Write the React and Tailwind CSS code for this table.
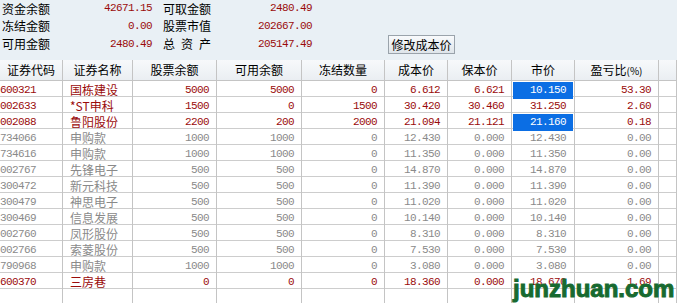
import React from 'react';

const RED = 'text-[#9a0b0b]';
const GREY = 'text-[#8a8a8a]';

const summary = [
  ['资金余额', '42671.15', '可取金额', '2480.49'],
  ['冻结金额', '0.00', '股票市值', '202667.00'],
  ['可用金额', '2480.49', '总资产', '205147.49'],
];

const headers = ['证券代码', '证券名称', '股票余额', '可用余额', '冻结数量', '成本价', '保本价', '市价', '盈亏比(%)', ''];

// code, name, 股票余额, 可用余额, 冻结, 成本, 保本, 市价, 盈亏, red, highlight
const rows = [
  ['600321', '国栋建设', '5000', '5000', '0', '6.612', '6.621', '10.150', '53.30', true, true],
  ['002633', '*ST申科', '1500', '0', '1500', '30.420', '30.460', '31.250', '2.60', true, false],
  ['002088', '鲁阳股份', '2200', '200', '2000', '21.094', '21.121', '21.160', '0.18', true, true],
  ['734066', '申购款', '1000', '1000', '0', '12.430', '0.000', '12.430', '0.00'],
  ['734616', '申购款', '1000', '1000', '0', '11.350', '0.000', '11.350', '0.00'],
  ['002767', '先锋电子', '500', '500', '0', '14.870', '0.000', '14.870', '0.00'],
  ['300472', '新元科技', '500', '500', '0', '11.390', '0.000', '11.390', '0.00'],
  ['300479', '神思电子', '500', '500', '0', '11.020', '0.000', '11.020', '0.00'],
  ['300469', '信息发展', '500', '500', '0', '10.140', '0.000', '10.140', '0.00'],
  ['002760', '凤形股份', '500', '500', '0', '8.310', '0.000', '8.310', '0.00'],
  ['002766', '索菱股份', '500', '500', '0', '7.530', '0.000', '7.530', '0.00'],
  ['790968', '申购款', '1000', '1000', '0', '3.080', '0.000', '3.080', '0.00'],
  ['600370', '三房巷', '0', '0', '0', '18.360', '0.000', '18.670', '1.69', true, false],
];

const cols = 'grid grid-cols-[63px_70px_84px_85px_83px_63px_64px_63px_84px_18px]';
const cjk = "font-['Noto_Sans_CJK_SC',sans-serif]";
const mono = "font-['Liberation_Mono',monospace] text-[11px] tracking-[-0.6px]";

function Label({ text }) {
  if (text === '总资产') {
    return (
      <span className="w-[48px] flex justify-between">
        <span>总</span><span>资</span><span>产</span>
      </span>
    );
  }
  return <span className="w-[48px]">{text}</span>;
}

function Summary() {
  return (
    <div className="h-[60px] flex">
      <div className="pl-[2px] flex flex-col">
        {summary.map((r, i) => (
          <div key={i} className={`flex items-center ${i === 0 ? 'h-[17px]' : 'h-[18px]'} text-[12px] leading-none text-black`}>
            <Label text={r[0]} />
            <span className={`w-[102px] text-right ${mono} ${RED}`}>{r[1]}</span>
            <span className="ml-[11px] flex"><Label text={r[2]} /></span>
            <span className={`w-[101px] text-right ${mono} ${RED}`}>{r[3]}</span>
          </div>
        ))}
      </div>
      <button className="self-end mb-[6px] ml-[76px] h-[19px] w-[67px] border border-[#9aa3ab] bg-gradient-to-b from-[#f8fafc] to-[#dfe5ea] text-[12px] leading-none text-black">
        修改成本价
      </button>
    </div>
  );
}

function Row({ r }) {
  const [code, name, a, b, c, d, e, f, g, red, hl] = r;
  const color = red ? RED : GREY;
  const num = `text-right pr-[7px] ${mono}`;
  const cell = 'border-r border-[#c4c4c4] h-full flex items-center';
  return (
    <div className={`${cols} h-[16px] border-b border-[#cdcdcd] ${color}`}>
      <div className={`${cell} ${mono} pl-0`}>{code}</div>
      <div className={`${cell} pl-[7px] text-[12px] leading-none`}>{name}</div>
      {[a, b, c, d, e].map((v, i) => (
        <div key={i} className={`${cell} justify-end ${num}`}>{v}</div>
      ))}
      <div className={`${cell} p-px`}>
        <div className={`w-full h-full flex items-center justify-end ${num} ${hl ? 'bg-[#0b6ee4] text-white' : ''}`}>{f}</div>
      </div>
      <div className={`${cell} justify-end ${num}`}>{g}</div>
      <div className={cell} />
    </div>
  );
}

export default function App() {
  return (
    <div className={`relative w-[677px] h-[303px] overflow-hidden bg-[#e9f0f5] ${cjk}`}>
      <Summary />
      <div className="bg-white">
        <div className={`${cols} h-[21px] border-b border-[#c4c4c4] bg-gradient-to-b from-[#f7f9fb] to-[#eaeef2] text-[12px] text-black`}>
          {headers.map((h, i) => (
            <div key={i} className="border-r border-[#c4c4c4] flex items-center justify-center leading-none">
              {h === '盈亏比(%)' ? (
                <span>盈亏比<span className="text-[10px]">(%)</span></span>
              ) : h}
            </div>
          ))}
        </div>
        {rows.map((r) => (
          <Row key={r[0]} r={r} />
        ))}
        <div className={`${cols} h-[20px]`}>
          {headers.map((_, i) => (
            <div key={i} className="border-r border-[#c4c4c4]" />
          ))}
        </div>
      </div>
      {/* site watermark over the table */}
      <div className="absolute left-[513px] top-[277px] text-[24px] leading-none font-bold text-[#176a30] [-webkit-text-stroke:1px_#176a30] font-['Liberation_Sans',sans-serif]">
        junzhuan.com
      </div>
    </div>
  );
}
